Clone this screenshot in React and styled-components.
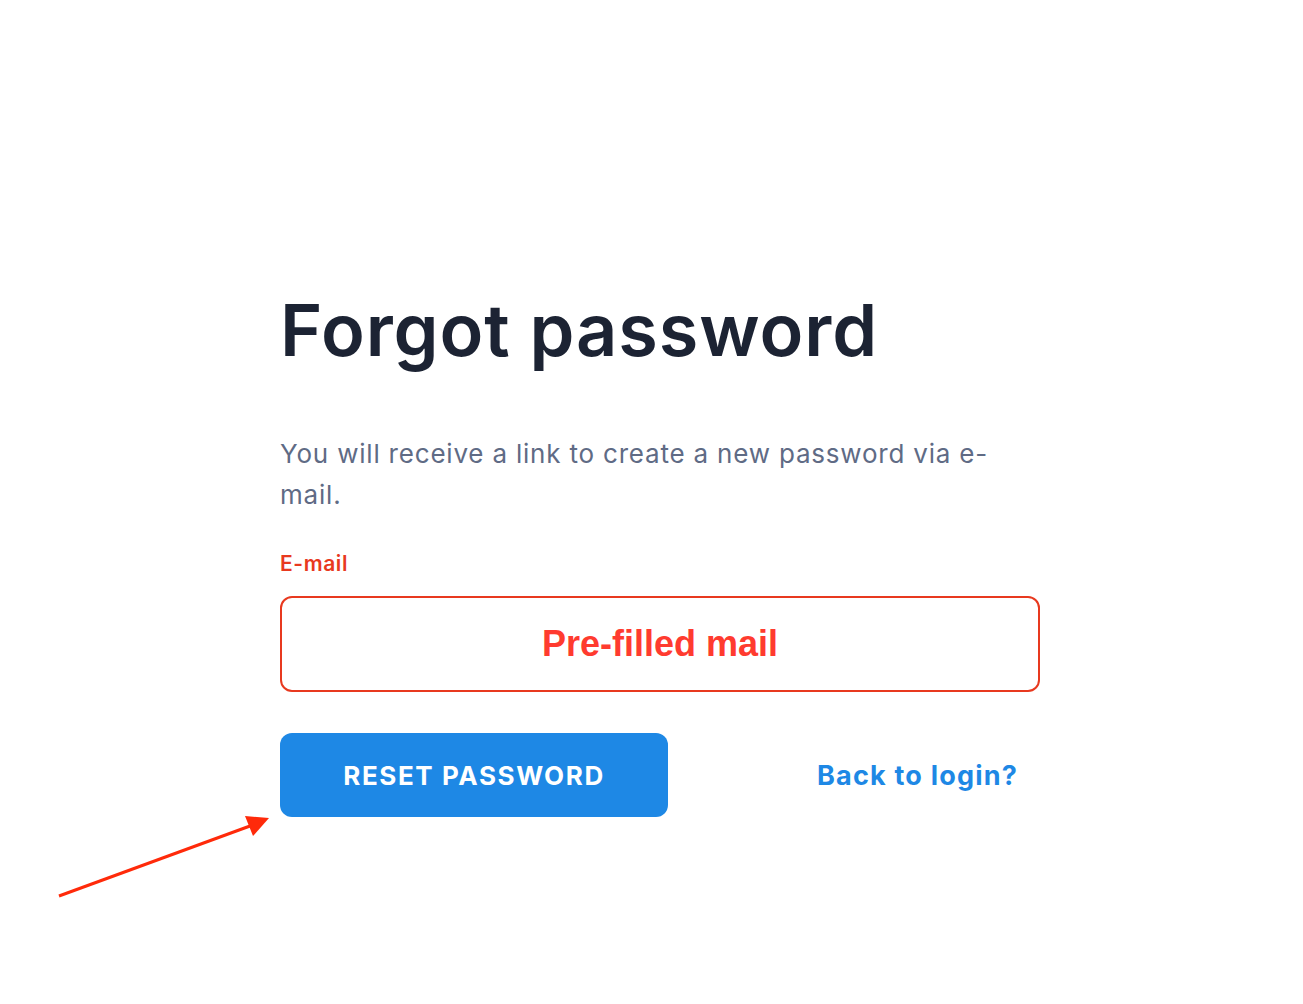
import React from 'react';
import styled, { createGlobalStyle } from 'styled-components';

const GlobalStyle = createGlobalStyle`
  html, body {
    margin: 0;
    padding: 0;
    background: #ffffff;
  }
  body {
    font-family: Inter, "Noto Sans", sans-serif;
  }
`;

const Page = styled.main`
  position: relative;
  min-height: 1004px;
  display: flex;
  justify-content: flex-start;
  padding: 0 0 0 280px;
  box-sizing: border-box;
`;

const Form = styled.form`
  width: 760px;
  padding-top: 286px;
  display: flex;
  flex-direction: column;
`;

const Title = styled.h1`
  margin: 0;
  font-family: Inter, sans-serif;
  font-size: 72px;
  font-weight: 600;
  line-height: 88px;
  color: #1c2333;
  letter-spacing: 0.9px;
`;

const Lead = styled.p`
  margin: 59px 0 0;
  font-family: Inter, sans-serif;
  font-size: 26px;
  font-weight: 400;
  line-height: 41px;
  color: #5f6b85;
  letter-spacing: 0.8px;
  max-width: 730px;
`;

const Label = styled.label`
  margin-top: 36px;
  font-family: Inter, sans-serif;
  font-size: 21px;
  font-weight: 600;
  letter-spacing: 0.6px;
  color: #e8391f;
`;

const Field = styled.div`
  margin-top: 20px;
  height: 96px;
  border: 2px solid #e8391f;
  border-radius: 12px;
  box-sizing: border-box;
  display: flex;
  align-items: center;
  justify-content: center;
  font-family: "Liberation Sans", Arial, sans-serif;
  font-weight: 700;
  font-size: 36px;
  color: #ff3b2f;
`;

const Actions = styled.div`
  margin-top: 41px;
  display: flex;
  align-items: center;
  justify-content: space-between;
`;

const Button = styled.button`
  width: 388px;
  height: 84px;
  border: none;
  border-radius: 12px;
  background: #1e88e5;
  color: #ffffff;
  font-family: Inter, sans-serif;
  font-size: 26px;
  font-weight: 700;
  letter-spacing: 1.6px;
  cursor: pointer;
`;

const Link = styled.a`
  margin-right: 22px;
  font-family: Inter, sans-serif;
  font-size: 27px;
  font-weight: 700;
  color: #1e88e5;
  letter-spacing: 1.2px;
  text-decoration: none;
`;

const Arrow = styled.svg`
  position: absolute;
  left: 55px;
  top: 812px;
`;

export default function App() {
  return (
    <>
      <GlobalStyle />
      <Page>
        <Form onSubmit={(e) => e.preventDefault()}>
          <Title>Forgot password</Title>
          <Lead>You will receive a link to create a new password via e-mail.</Lead>
          <Label>E-mail</Label>
          <Field>Pre-filled mail</Field>
          <Actions>
            <Button type="submit">RESET PASSWORD</Button>
            <Link href="#">Back to login?</Link>
          </Actions>
        </Form>
        <Arrow width="220" height="92" viewBox="0 0 220 92">
          <line x1="4" y1="84" x2="195" y2="14" stroke="#ff2a0a" strokeWidth="3" />
          <polygon points="214,6 190,4 198,24" fill="#ff2a0a" />
        </Arrow>
      </Page>
    </>
  );
}
